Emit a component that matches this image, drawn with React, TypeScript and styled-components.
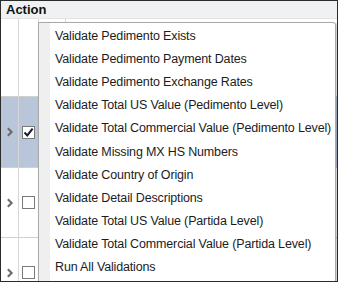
import React from "react";
import styled, { createGlobalStyle } from "styled-components";

const Global = createGlobalStyle`
  html, body { margin: 0; padding: 0; background: #ffffff; }
  * { box-sizing: border-box; }
`;

const Frame = styled.div`
  position: relative;
  width: 338px;
  height: 282px;
  border: 1px solid #2b2b2b;
  overflow: hidden;
  background: #ffffff;
  font-family: "Liberation Sans", Arial, sans-serif;
`;

const Header = styled.div`
  height: 18px;
  background: #f0f1f3;
  border-bottom: 1px solid #e2e3e6;
  display: flex;
  align-items: center;
  padding-left: 5px;
  font-size: 13px;
  font-weight: bold;
  color: #111111;
`;

const Body = styled.div`
  display: flex;
  flex-direction: column;
`;

const Row = styled.div<{ $h: number; $selected?: boolean }>`
  height: ${(p) => p.$h}px;
  display: grid;
  grid-template-columns: 18px 20px 27px 1fr;
  background: ${(p) => (p.$selected ? "#b9c6d9" : "#ffffff")};
  border-bottom: 1px solid #d0d0d0;
  flex: none;
`;

const Cell = styled.div<{ $line?: boolean }>`
  display: flex;
  align-items: center;
  justify-content: center;
  border-right: ${(p) => (p.$line ? "1px solid #d6d6d6" : "none")};
`;

const Chevron = () => (
  <svg width="8" height="10" viewBox="0 0 8 10">
    <path d="M1.8 1.3 L5.6 5 L1.8 8.7" fill="none" stroke="#6b6b6b" strokeWidth="2.1" />
  </svg>
);

const Box = styled.div`
  width: 13px;
  height: 13px;
  border: 1px solid #7a7a7a;
  background: #ffffff;
  display: flex;
  align-items: center;
  justify-content: center;
`;

const CheckBox = ({ checked }: { checked?: boolean }) => (
  <Box>
    {checked && (
      <svg width="11" height="11" viewBox="0 0 11 11">
        <path d="M1.5 5.5 L4.3 8.4 L9.6 1.6" fill="none" stroke="#141b2b" strokeWidth="2" />
      </svg>
    )}
  </Box>
);

const Menu = styled.div`
  position: absolute;
  left: 37px;
  top: 21px;
  width: 298px;
  height: 300px;
  background: #ffffff;
  border: 1px solid #a9a9a9;
  border-top-right-radius: 3px;
  box-shadow: 1px 1px 2px rgba(0, 0, 0, 0.25);
  display: flex;
`;

const Gutter = styled.div`
  width: 11px;
  background: #efefef;
  flex: none;
`;

const Items = styled.ul`
  list-style: none;
  margin: 0;
  padding: 1px 0 0 5px;
  flex: 1;
`;

const Item = styled.li`
  height: 23.2px;
  display: flex;
  align-items: center;
  font-size: 12.5px;
  letter-spacing: -0.15px;
  color: #1c1c1c;
  white-space: nowrap;
`;

const items = [
  "Validate Pedimento Exists",
  "Validate Pedimento Payment Dates",
  "Validate Pedimento Exchange Rates",
  "Validate Total US Value (Pedimento Level)",
  "Validate Total Commercial Value (Pedimento Level)",
  "Validate Missing MX HS Numbers",
  "Validate Country of Origin",
  "Validate Detail Descriptions",
  "Validate Total US Value (Partida Level)",
  "Validate Total Commercial Value (Partida Level)",
  "Run All Validations",
];

const rows = [
  { h: 78, selected: false, show: false, checked: false },
  { h: 71, selected: true, show: true, checked: true },
  { h: 70, selected: false, show: true, checked: false },
  { h: 70, selected: false, show: true, checked: false },
];

export default function App() {
  return (
    <>
      <Global />
      <Frame>
        <Header>Action</Header>
        <Body>
          {rows.map((r, i) => (
            <Row key={i} $h={r.h} $selected={r.selected}>
              <Cell $line>{r.show && <Chevron />}</Cell>
              <Cell $line>{r.show && <CheckBox checked={r.checked} />}</Cell>
              <Cell $line />
              <Cell />
            </Row>
          ))}
        </Body>
        <Menu>
          <Gutter />
          <Items>
            {items.map((t) => (
              <Item key={t}>{t}</Item>
            ))}
          </Items>
        </Menu>
      </Frame>
    </>
  );
}
